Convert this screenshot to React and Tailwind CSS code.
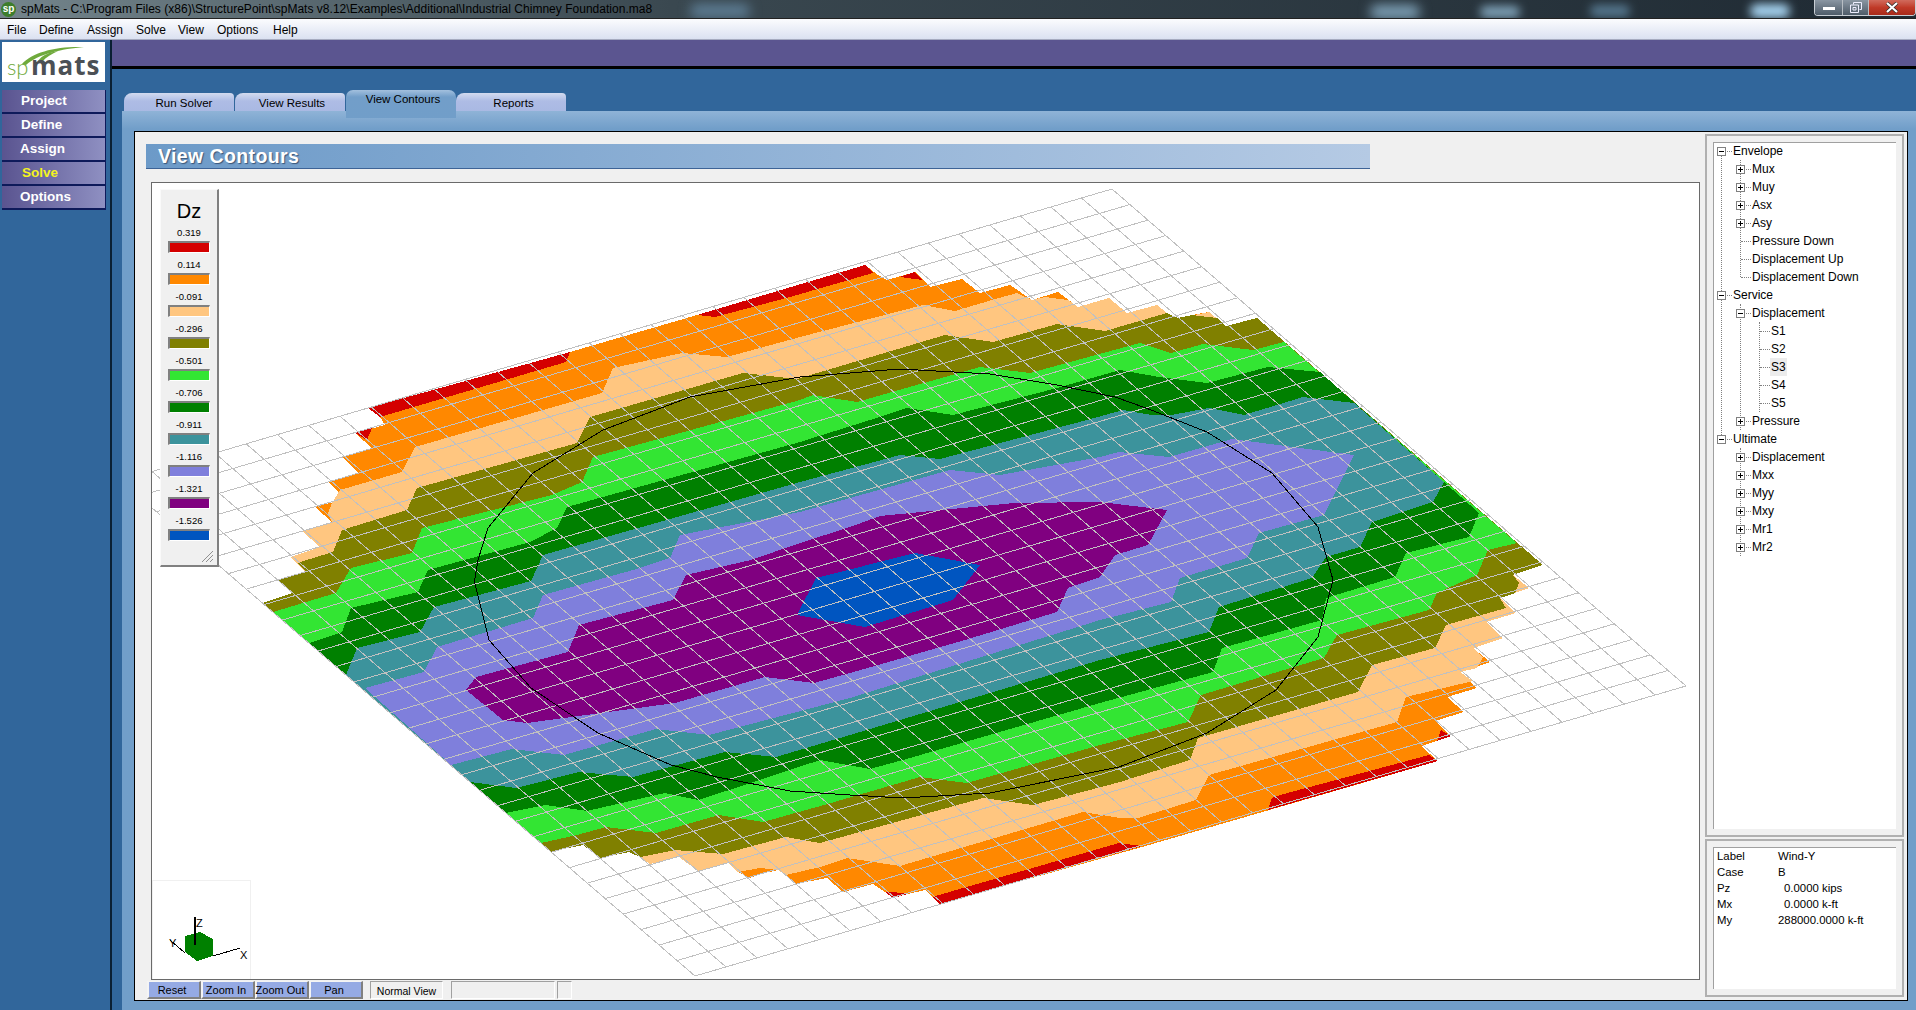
import React from "react";

const SLAB = "368,408 570,352 697,315 865,265 878,275 887,280 915,272 923,280 930,287 962,279 980,293 1010,285 1032,300 1058,292 1078,307 1109,298 1127,313 1157,305 1167,313 1178,318 1192,315 1209,312 1226,326 1257,318 1543,565 1513,575 1529,588 1500,598 1516,613 1486,622 1503,638 1473,648 1490,662 1460,672 1477,688 1447,697 1464,712 1435,721 1451,736 1421,746 1438,761 1142,847 940,904 925,890 908,894 893,898 885,892 873,884 843,892 827,878 795,884 786,875 778,870 761,874 749,878 738,872 728,863 698,871 679,857 650,864 640,857 629,852 600,858 583,845 550,852 541,843 506,813 470,782 451,765 365,688 346,675 309,643 263,603 292,593 277,580 306,572 290,557 320,547 302,531 332,522 315,507 345,499 328,482 359,473 342,457 372,448 355,433 385,425 380,417";
const BANDS = [
  ["#ffc680", "332,503 340,490 402,472 415,447 602,393 613,368 682,353 727,357 800,337 923,305 955,311 992,300 1017,293 1032,300 1045,297 1068,300 1078,307 1109,298 1127,313 1157,305 1167,313 1178,318 1194,315 1209,312 1226,326 1257,318 1543,565 1513,575 1529,588 1500,598 1516,613 1486,622 1503,638 1473,648 1483,657 1477,668 1460,672 1473,681 1406,697 1397,722 1209,775 1196,800 1138,818 1120,818 1083,812 900,866 847,858 820,867 786,875 778,870 760,868 738,872 728,863 698,871 679,857 650,864 640,857 629,852 600,858 583,845 550,852 541,843 506,813 263,603 292,593 277,580 306,572 290,557 320,547 302,531 332,522 328,513"],
  ["#808000", "300,562 333,552 342,530 407,510 417,488 577,443 590,417 743,373 797,379 945,335 993,342 1057,324 1105,331 1167,313 1178,318 1192,315 1217,318 1226,326 1257,318 1543,565 1513,575 1519,583 1515,593 1500,598 1506,608 1446,625 1435,648 1372,665 1358,692 1198,738 1190,760 1120,782 1033,805 983,798 820,843 786,837 723,854 675,850 640,857 629,852 600,858 583,845 550,852 541,843 506,813 263,603 292,593 277,580 306,572 298,563"],
  ["#33e533", "273,612 336,593 351,568 412,553 422,528 552,495 582,482 593,457 800,400 813,395 857,402 980,367 1030,373 1140,343 1171,353 1203,344 1253,350 1284,342 1517,543 1488,550 1477,575 1437,593 1429,610 1337,635 1324,658 1201,695 1188,722 1100,745 967,783 920,777 824,805 763,822 719,815 656,833 606,827 577,835 541,843 506,813"],
  ["#008000", "309,643 342,632 351,608 418,592 428,570 530,542 557,528 567,507 800,442 870,420 907,408 953,415 1057,388 1120,370 1159,377 1207,383 1268,367 1320,372 1479,513 1469,537 1406,553 1395,577 1326,598 1322,620 1222,648 1213,672 1100,703 903,760 870,769 820,760 751,783 698,800 665,793 587,811 545,805 506,813"],
  ["#3c939c", "346,675 357,648 420,632 434,607 531,581 543,555 730,502 800,482 900,455 940,459 1087,420 1123,410 1152,415 1171,415 1209,408 1244,415 1303,397 1354,403 1444,482 1433,502 1372,522 1360,547 1326,557 1312,578 1219,607 1209,632 1100,660 850,735 776,757 725,752 633,777 579,772 516,788 470,782"],
  ["#7f7fdc", "365,688 424,672 437,647 533,618 543,595 633,570 670,558 680,535 800,512 950,470 1000,475 1100,457 1119,452 1169,457 1232,439 1354,455 1324,515 1259,533 1247,558 1180,578 1171,602 1100,620 850,698 709,735 656,729 564,755 512,749 451,765"],
  ["#800080", "466,690 476,677 568,652 579,625 673,600 686,575 751,560 800,543 850,527 880,516 1014,503 1100,502 1167,510 1148,545 1115,555 1100,577 1068,588 1057,612 965,640 850,673 814,683 765,677 675,703 527,723 503,720"],
  ["#0055c0", "816,578 915,553 980,565 953,600 865,627 797,615"],
];
const REDS = [
  "368,408 570,352 566,362 380,417",
  "355,433 372,428 367,440",
  "697,315 865,265 873,273 790,297 715,317",
  "900,277 914,272 923,280",
  "1441,730 1451,736 1437,741",
  "1429,755 1438,761 1268,810 1272,798 1280,795",
  "885,892 893,892 908,894 893,898",
  "932,897 1119,843 1142,846 940,904",
];
const CIRCLE = "475,578 478,560 488,528 533,473 603,430 690,397 800,377 900,369 990,374 1057,385 1115,397 1146,408 1207,432 1272,473 1318,527 1333,580 1318,637 1276,690 1207,733 1119,767 990,793 903,798 850,795 790,791 717,777 671,765 598,733 531,688 489,640 474,580 475,578";

const N = 32;
const A = [1112, 189], B = [1686, 686], C = [695, 976], D = [120.6, 480.8];
const lerp = (p, q, t) => [p[0] + (q[0] - p[0]) * t, p[1] + (q[1] - p[1]) * t];
const gridLines = [];
for (let i = 0; i <= N; i++) {
  const cum = 30.5 * i + 0.015 * i * i;
  const onAD = [A[0] - cum, A[1] + 0.2944 * cum];
  gridLines.push([onAD, lerp(B, C, i / N)]);
  gridLines.push([lerp(A, B, i / N), lerp(D, C, i / N)]);
}

function Chart() {
  return (
    <svg className="absolute left-0 top-0" width="1547" height="796" viewBox="152 183 1547 796">
      <g shapeRendering="crispEdges">
        <polygon points={SLAB} fill="#ff8800" />
        {REDS.map((p) => <polygon key={p} points={p} fill="#d40000" />)}
        {BANDS.map(([c, p]) => <polygon key={c} points={p} fill={c} />)}
      </g>
      <g stroke="#c0c0c0" strokeWidth="1" shapeRendering="crispEdges">
        {gridLines.map(([a, b], i) => <line key={i} x1={a[0]} y1={a[1]} x2={b[0]} y2={b[1]} />)}
      </g>
      <polyline points={CIRCLE} fill="none" stroke="#000" strokeWidth="1" shapeRendering="crispEdges" />
      <rect x="152.5" y="880.5" width="98" height="100" fill="none" stroke="#f0f0f0" />
      <g shapeRendering="crispEdges">
        <polygon points="185,936 200,932 213,939 213,956 197,961 185,952" fill="#008000" />
        <line x1="185" y1="953" x2="170" y2="940" stroke="#000" />
        <line x1="213" y1="956" x2="240" y2="948" stroke="#000" />
        <line x1="195" y1="945" x2="195" y2="917" stroke="#000" strokeWidth="1.2" />
      </g>
      <text x="169" y="947" fontSize="11" fontFamily="Liberation Sans, sans-serif" fill="#000">Y</text>
      <text x="240" y="959" fontSize="11" fontFamily="Liberation Sans, sans-serif" fill="#000">X</text>
      <text x="196" y="927" fontSize="11" fontFamily="Liberation Sans, sans-serif" fill="#000">Z</text>
    </svg>
  );
}

const LEGEND = [
  ["0.319", "bg-[#d40000]"], ["0.114", "bg-[#ff8800]"], ["-0.091", "bg-[#ffc680]"], ["-0.296", "bg-[#808000]"],
  ["-0.501", "bg-[#33e533]"], ["-0.706", "bg-[#008000]"], ["-0.911", "bg-[#3c939c]"], ["-1.116", "bg-[#7f7fdc]"],
  ["-1.321", "bg-[#800080]"], ["-1.526", "bg-[#0055c0]"],
];

function Legend() {
  return (
    <div className="absolute left-[8px] top-[6px] w-[59px] h-[378px] bg-[#f0f0f0] border-t border-l border-t-[#fafafa] border-l-[#fafafa] border-r-2 border-b-2 border-r-[#808080] border-b-[#808080]">
      <div className="h-[32px] flex items-center justify-center text-[20px] leading-none text-black pt-[9px]">Dz</div>
      {LEGEND.map(([v, c]) => (
        <div key={v} className="mb-px">
          <div className="h-[19px] pt-[2px] flex items-center justify-center text-[9.5px] leading-none text-black">{v}</div>
          <div className={`ml-[7px] w-[42px] h-[12px] border-t-2 border-l-2 border-t-[#808080] border-l-[#808080] border-r border-b border-r-white border-b-white ${c}`} />
        </div>
      ))}
      <svg className="absolute right-[3px] bottom-[3px]" width="13" height="12" viewBox="0 0 13 12">
        <path d="M1 12 L12 1 M5 12 L12 5 M9 12 L12 9" stroke="#909090" strokeWidth="1" fill="none" />
      </svg>
    </div>
  );
}

function Expander({ open }) {
  return (
    <span className="relative z-10 block w-[9px] h-[9px] shrink-0 border border-[#808080] bg-white">
      <span className="absolute left-px top-[3px] w-[5px] h-px bg-black" />
      {!open && <span className="absolute left-[3px] top-px w-px h-[5px] bg-black" />}
    </span>
  );
}

const TREE = [
  ["Envelope", 0, "open"], ["Mux", 1, "closed"], ["Muy", 1, "closed"], ["Asx", 1, "closed"], ["Asy", 1, "closed"],
  ["Pressure Down", 1, "leaf"], ["Displacement Up", 1, "leaf"], ["Displacement Down", 1, "leaf"],
  ["Service", 0, "open"], ["Displacement", 1, "open"], ["S1", 2, "leaf"], ["S2", 2, "leaf"], ["S3", 2, "leaf", true],
  ["S4", 2, "leaf"], ["S5", 2, "leaf"], ["Pressure", 1, "closed"], ["Ultimate", 0, "open"],
  ["Displacement", 1, "closed"], ["Mxx", 1, "closed"], ["Myy", 1, "closed"], ["Mxy", 1, "closed"], ["Mr1", 1, "closed"], ["Mr2", 1, "closed"],
];
const INDENT = ["pl-[3px]", "pl-[22px]", "pl-[41px]"];

function TreeRow({ label, level, kind, selected }) {
  return (
    <div className={`relative h-[18px] flex items-center ${INDENT[level]}`}>
      {kind === "leaf" ? (
        <>
          <span className="w-[5px] shrink-0" />
          <span className="w-[10px] mr-px shrink-0 border-t border-dotted border-[#808080]" />
        </>
      ) : (
        <>
          <Expander open={kind === "open"} />
          <span className="w-[5px] ml-px mr-px shrink-0 border-t border-dotted border-[#808080]" />
        </>
      )}
      <span className={`text-[12px] leading-[18px] text-black px-[1px] -ml-px ${selected ? "bg-[#ececec]" : ""}`}>{label}</span>
    </div>
  );
}

function Tree() {
  return (
    <div className="relative -mt-px">
      <span className="absolute left-[7px] top-[9px] h-[288px] border-l border-dotted border-[#808080]" />
      <span className="absolute left-[26px] top-[18px] h-[117px] border-l border-dotted border-[#808080]" />
      <span className="absolute left-[26px] top-[162px] h-[126px] border-l border-dotted border-[#808080]" />
      <span className="absolute left-[26px] top-[306px] h-[108px] border-l border-dotted border-[#808080]" />
      <span className="absolute left-[45px] top-[180px] h-[90px] border-l border-dotted border-[#808080]" />
      {TREE.map(([label, level, kind, sel], i) => (
        <TreeRow key={i} label={label} level={level} kind={kind} selected={sel} />
      ))}
    </div>
  );
}

const INFO = [
  ["Label", "Wind-Y", "ml-0"], ["Case", "B", "ml-0"], ["Pz", "0.0000 kips", "ml-[6px]"],
  ["Mx", "0.0000 k-ft", "ml-[6px]"], ["My", "288000.0000 k-ft", "ml-0"],
];

function Logo() {
  return (
    <div className="relative mx-[2px] mt-[2px] w-[103px] h-[40px] bg-white">
      <svg className="absolute left-0 top-0" width="103" height="40" viewBox="0 0 103 40">
        <path d="M20 22 C30 10 55 4 82 5 C60 7 36 12 24 23 Z" fill="#6faa3c" />
        <path d="M36 19 C40 13 48 10 56 9 C50 12 44 15 40 20 Z" fill="#6faa3c" />
      </svg>
      <span className="absolute left-[5px] top-[12px] text-[22px] leading-[26px] font-light text-[#6faa3c] font-['Lato',sans-serif]">sp</span>
      <span className="absolute left-[29px] top-[5px] text-[26px] leading-[36px] font-bold text-[#4b5055] font-['Open_Sans',sans-serif] tracking-[1px]">mats</span>
    </div>
  );
}

const NAV = [["Project", "pl-[19px]", "text-white"], ["Define", "pl-[19px]", "text-white"], ["Assign", "pl-[18px]", "text-white"], ["Solve", "pl-[20px]", "text-[#f4f41e]"], ["Options", "pl-[18px]", "text-white"]];
const TABS = [["Run Solver", "pl-[10px]"], ["View Results", "pl-[4px]"], ["View Contours", "pl-[4px]"], ["Reports", "pl-[5px]"]];
const MENU = [["File", "w-[32px]"], ["Define", "w-[48px]"], ["Assign", "w-[49px]"], ["Solve", "w-[42px]"], ["View", "w-[39px]"], ["Options", "w-[56px]"], ["Help", "w-[40px]"]];
const STRIP = ["Reset", "Zoom In", "Zoom Out", "Pan"];

export default function App() {
  return (
    <div className="w-[1916px] h-[1010px] overflow-hidden flex flex-col bg-[#31669b] font-['Liberation_Sans',Arial,sans-serif] text-black">
      <div className="relative h-[18px] shrink-0 flex items-center overflow-hidden bg-gradient-to-r from-[#74858c] via-[#3a4850] via-35% to-[#1f2a33]">
        <span className="absolute left-[690px] top-[4px] w-[60px] h-[14px] rounded-full bg-[#5d7d94] blur-[6px]" />
        <span className="absolute left-[1370px] top-[5px] w-[50px] h-[14px] rounded-full bg-[#7fa2b8] blur-[6px]" />
        <span className="absolute left-[1480px] top-[6px] w-[40px] h-[12px] rounded-full bg-[#7fa2b8] blur-[5px]" />
        <span className="absolute left-[1590px] top-[5px] w-[40px] h-[12px] rounded-full bg-[#56788f] blur-[5px]" />
        <span className="absolute left-[1750px] top-[4px] w-[40px] h-[14px] rounded-full bg-[#a6d3f0] blur-[5px]" />
        <span className="relative w-[15px] h-[15px] ml-px rounded-full bg-[#3d7d2c] flex items-center justify-center text-[10px] font-bold leading-none text-white">sp</span>
        <span className="relative ml-[5px] text-[12px] leading-none tracking-[0.02px] text-black whitespace-nowrap">spMats - C:\Program Files (x86)\StructurePoint\spMats v8.12\Examples\Additional\Industrial Chimney Foundation.ma8</span>
        <div className="absolute right-0 top-0 w-[102px] h-[16px] flex rounded-b-[4px] border border-t-0 border-[#c8ced4] overflow-hidden">
          <div className="w-[28px] flex items-center justify-center border-r border-[#b8bec4] bg-gradient-to-b from-[#8a96a2] to-[#4f5c69]">
            <span className="block w-[12px] h-[3px] mt-[2px] bg-white" />
          </div>
          <div className="w-[26px] flex items-center justify-center border-r border-[#b8bec4] bg-gradient-to-b from-[#8a96a2] to-[#4f5c69]">
            <svg width="12" height="11" viewBox="0 0 12 11"><path d="M3.5 2.5V.5h8v7h-2M.5 3h8v7.5h-8z M3 5.5h3v2.5h-3z" fill="none" stroke="#eef" strokeWidth="1" /></svg>
          </div>
          <div className="flex-1 flex items-center justify-center bg-gradient-to-b from-[#d06a5c] via-[#c03a28] to-[#a82a1a]">
            <svg width="14" height="11" viewBox="0 0 14 11"><path d="M2 1 L12 10 M12 1 L2 10" stroke="#30302f" strokeWidth="3.6" /><path d="M2 1 L12 10 M12 1 L2 10" stroke="#fff" strokeWidth="2.2" /></svg>
          </div>
        </div>
      </div>
      <div className="h-[22px] shrink-0 flex items-center pl-[7px] pt-[2px] border-t border-b border-t-[#222] border-b-[#a6abc0] bg-gradient-to-b from-[#fbfcfe] to-[#dbe1f1]">
        {MENU.map(([m, w]) => <span key={m} className={`${w} text-[12px] leading-none text-black`}>{m}</span>)}
      </div>
      <div className="flex-1 flex min-h-0">
        <div className="w-[110px] shrink-0 flex flex-col">
          <Logo />
          <div className="mt-[8px] ml-[2px] w-[104px] flex flex-col">
            {NAV.map(([n, pl, c]) => (
              <div key={n} className={`h-[24px] flex items-center ${pl} ${c} text-[13.5px] font-bold leading-none border-r border-b-2 border-r-[#0e1a5a] border-b-[#0e1a5a] bg-gradient-to-r from-[#5a5490] to-[#8f90c2]`}>{n}</div>
            ))}
          </div>
        </div>
        <div className="w-[2px] shrink-0 bg-[#0a1f33]" />
        <div className="flex-1 min-w-0 flex flex-col">
          <div className="h-[26px] shrink-0 bg-[#5b5590]" />
          <div className="h-[3px] shrink-0 bg-black" />
          <div className="h-[21px] shrink-0 mt-[21px] pl-[12px] flex items-end relative z-10">
            {TABS.map(([t, pl], i) => i === 2 ? (
              <div key={t} className={`w-[110px] h-[28px] -mb-[7px] pb-[8px] ${pl} flex items-center justify-center text-[11.5px] leading-none rounded-t-[7px] bg-gradient-to-b from-[#a3c0de] via-[#729ec9] via-25% to-[#719ec9]`}>{t}</div>
            ) : (
              <div key={t} className={`h-[18px] flex items-center justify-center pt-[3px] ${pl} text-[11.5px] leading-none rounded-tl-[8px] rounded-tr-[4px] bg-gradient-to-b from-[#d3dbef] via-[#aebce5] via-45% to-[#a9b9e3] ${i === 3 ? "w-[110px]" : "w-[110px] mr-px"}`}>{t}</div>
            ))}
          </div>
          <div className="flex-1 min-h-0 ml-[10px] pl-[12px] pt-[20px] pr-[8px] pb-[9px] bg-gradient-to-b from-[#8fb3d7] via-[#719ec9] via-[2%] to-[#719ec9]">
            <div className="h-full border border-black bg-[#f0f0f0] flex">
              <div className="w-[1570px] shrink-0 pl-[11px]">
                <div className="mt-[12px] w-[1224px] h-[25px] flex items-center pl-[12px] pt-[1px] text-[19.5px] font-bold leading-none tracking-[0.4px] text-white [text-shadow:1px_1px_1px_#3a5578] border-b border-b-[#3d6396] bg-gradient-to-r from-[#6c9ac8] to-[#b5cae4]">View Contours</div>
                <div className="relative mt-[13px] ml-[5px] w-[1549px] h-[798px] border border-[#6a6a6a] bg-white overflow-hidden">
                  <Chart />
                  <Legend />
                </div>
                <div className="mt-px ml-px flex h-[18px] text-[11px] leading-none">
                  {STRIP.map((s) => (
                    <div key={s} className="w-[54px] flex items-center justify-center whitespace-nowrap pt-[2px] pr-[4px] border-l-2 border-t border-l-[#f4f4f4] border-t-[#f4f4f4] border-r-2 border-b-2 border-r-[#808080] border-b-[#808080] bg-[#95aae4]">{s}</div>
                  ))}
                  <div className="ml-[7px] w-[73px] flex items-center justify-center pt-[2px] text-[10.5px] border-l border-t border-l-[#a0a0a0] border-t-[#a0a0a0] border-r border-b border-r-white border-b-white">Normal View</div>
                  <div className="ml-[8px] w-[104px] border-l border-t border-l-[#a0a0a0] border-t-[#a0a0a0] border-r border-b border-r-white border-b-white" />
                  <div className="ml-[2px] w-[15px] border-l border-t border-l-[#a0a0a0] border-t-[#a0a0a0] border-r border-b border-r-white border-b-white" />
                </div>
              </div>
              <div className="w-[199px] shrink-0 pt-[2px] flex flex-col gap-[2px]">
                <div className="h-[703px] border-2 border-[#b0b0b0] p-[6px]">
                  <div className="h-full bg-white border-t border-l border-t-[#a0a0a0] border-l-[#a0a0a0] overflow-hidden"><Tree /></div>
                </div>
                <div className="h-[158px] border-2 border-[#b0b0b0] p-[6px]">
                  <div className="h-full bg-white border-t border-l border-t-[#a0a0a0] border-l-[#a0a0a0] pl-[3px] text-[11.4px] leading-[16px]">
                    {INFO.map(([k, v, m]) => (
                      <div key={k} className="flex h-[16px]">
                        <span className="w-[61px] shrink-0">{k}</span>
                        <span className={`${m} whitespace-nowrap`}>{v}</span>
                      </div>
                    ))}
                  </div>
                </div>
              </div>
            </div>
          </div>
        </div>
      </div>
    </div>
  );
}
